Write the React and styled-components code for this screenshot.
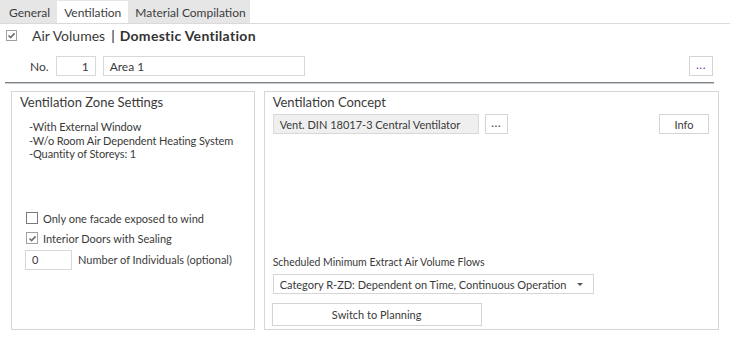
import React from 'react';
import styled, { createGlobalStyle } from 'styled-components';

const GlobalStyle = createGlobalStyle`
  html, body {
    margin: 0;
    padding: 0;
    background: #ffffff;
  }
  body {
    font-family: Lato, "Liberation Sans", sans-serif;
    color: #3a3a3a;
  }
`;

const Page = styled.div`
  width: 730px;
  height: 340px;
  background: #fff;
  overflow: hidden;
`;

const TabStrip = styled.div`
  height: 24px;
  border-bottom: 1px solid #dadada;
  box-sizing: border-box;
  display: flex;
`;

const TabGroup = styled.div`
  display: flex;
  align-items: flex-end;
  background: #e6e6e6;
  width: 250px;
  padding-left: 2px;
  box-sizing: border-box;
`;

const Tab = styled.div`
  height: 22px;
  display: flex;
  align-items: center;
  padding: 0 7px;
  font-size: 12px;
  white-space: nowrap;
  color: #3c3c3c;
  background: ${p => (p.$active ? '#ffffff' : 'transparent')};
`;

const TitleRow = styled.div`
  display: flex;
  align-items: center;
  height: 24px;
  padding-left: 6px;
  margin-top: -1px;
`;

const Check = styled.span`
  width: ${p => p.$size || 11}px;
  height: ${p => p.$size || 11}px;
  border: 1px solid ${p => (p.$checked ? '#a0a0a0' : '#7a7a7a')};
  background: #fff;
  box-sizing: border-box;
  display: inline-flex;
  align-items: center;
  justify-content: center;
  flex-shrink: 0;
`;

const TitleText = styled.span`
  font-size: 14px;
  margin-left: 15px;
  color: #3a3a3a;
  white-space: nowrap;
`;

const Bold = styled.span`
  font-weight: 700;
  color: #333;
  letter-spacing: 0.3px;
`;

const Divider = styled.span`
  display: inline-block;
  margin: 0 5px 0 6px;
  color: #222;
`;

const NumberRow = styled.div`
  display: flex;
  align-items: center;
  height: 20px;
  margin-top: 9px;
  padding-left: 30px;
  padding-right: 17px;
`;

const Label = styled.span`
  font-size: ${p => p.$size || 12}px;
  color: #3c3c3c;
  white-space: nowrap;
`;

const Field = styled.div`
  height: 20px;
  box-sizing: border-box;
  border: 1px solid #d8d8d8;
  background: ${p => (p.$grey ? '#efefef' : '#fff')};
  width: ${p => p.$w}px;
  display: flex;
  align-items: center;
  justify-content: ${p => (p.$right ? 'flex-end' : 'flex-start')};
  padding: 0 6px;
  font-size: ${p => p.$size || 12}px;
  color: #3a3a3a;
  white-space: nowrap;
  overflow: hidden;
  flex-shrink: 0;
`;

const Spacer = styled.div`
  flex: 1;
`;

const DotsButton = styled.div`
  width: ${p => p.$w || 24}px;
  height: 20px;
  box-sizing: border-box;
  border: 1px solid #d4d4d4;
  background: #fff;
  display: flex;
  align-items: center;
  justify-content: center;
  font-size: 12px;
  color: ${p => (p.$purple ? '#6b3fa0' : '#3a3a3a')};
  letter-spacing: 0.5px;
  padding-bottom: 4px;
  flex-shrink: 0;
`;

const Rule = styled.div`
  height: 2px;
  margin: 6px 16px 0 5px;
  background: linear-gradient(#7d848a 0 1px, #c9cdd0 1px 2px);
`;

const Panels = styled.div`
  display: flex;
  gap: 9px;
  padding: 7px 11px 0 11px;
`;

const Panel = styled.div`
  width: ${p => p.$w}px;
  height: 239px;
  border: 1px solid #d6d6d6;
  box-sizing: border-box;
  display: flex;
  flex-direction: column;
  padding: ${p => p.$pad};
`;

const PanelTitle = styled.div`
  font-size: 13px;
  color: #3a3a3a;
  height: 18px;
  line-height: 18px;
  white-space: nowrap;
`;

const InfoList = styled.div`
  margin-top: 9px;
  padding-left: 9px;
  font-size: 11px;
  letter-spacing: -0.1px;
  line-height: 13.5px;
  color: #3a3a3a;
  white-space: nowrap;
`;

const Body = styled.div`
  padding-left: 5px;
  display: flex;
  flex-direction: column;
`;

const CheckRow = styled.label`
  display: flex;
  align-items: center;
  gap: 5px;
  height: 13px;
  font-size: 11px;
  color: #3a3a3a;
  white-space: nowrap;
  margin-top: ${p => p.$mt}px;
  padding-left: 1px;
`;

const IndivRow = styled.div`
  display: flex;
  align-items: center;
  gap: 6px;
  margin-top: 5px;
`;

const ConceptRow = styled.div`
  display: flex;
  align-items: center;
  margin-top: 3px;
  gap: 6px;
`;

const Button = styled.div`
  height: ${p => p.$h || 20}px;
  width: ${p => p.$w}px;
  box-sizing: border-box;
  border: 1px solid #d4d4d4;
  background: #fff;
  display: flex;
  align-items: center;
  justify-content: center;
  font-size: 11px;
  color: #3a3a3a;
  white-space: nowrap;
`;

const SubLabel = styled.div`
  font-size: 10.5px;
  color: #3a3a3a;
  margin-top: auto;
  white-space: nowrap;
`;

const Select = styled.div`
  width: 321px;
  height: 20px;
  box-sizing: border-box;
  border: 1px solid #d6d6d6;
  display: flex;
  align-items: center;
  padding: 0 10px 0 6px;
  font-size: 11px;
  color: #3a3a3a;
  white-space: nowrap;
  margin-top: 6px;
`;

const Caret = styled.span`
  margin-left: auto;
  width: 0;
  height: 0;
  border-left: 3px solid transparent;
  border-right: 3px solid transparent;
  border-top: 3px solid #555;
`;

const Tick = () => (
  <svg width="9" height="9" viewBox="0 0 9 9">
    <path d="M1.5 4.5 L3.6 6.6 L7.6 2.4" fill="none" stroke="#6e6e6e" strokeWidth="1.6" />
  </svg>
);

const App = () => (
  <Page>
    <GlobalStyle />
    <TabStrip>
      <TabGroup>
        <Tab>General</Tab>
        <Tab $active>Ventilation</Tab>
        <Tab>Material Compilation</Tab>
      </TabGroup>
    </TabStrip>

    <TitleRow>
      <Check $checked><Tick /></Check>
      <TitleText>
        Air Volumes<Divider>|</Divider><Bold>Domestic Ventilation</Bold>
      </TitleText>
    </TitleRow>

    <NumberRow>
      <Label>No.</Label>
      <Field $w={40} $right style={{ marginLeft: 7 }}>1</Field>
      <Field $w={202} style={{ marginLeft: 7 }}>Area 1</Field>
      <Spacer />
      <DotsButton $purple>...</DotsButton>
    </NumberRow>

    <Rule />

    <Panels>
      <Panel $w={244} $pad="1px 8px 0 8px">
        <PanelTitle>Ventilation Zone Settings</PanelTitle>
        <InfoList>
          <div>-With External Window</div>
          <div>-W/o Room Air Dependent Heating System</div>
          <div>-Quantity of Storeys: 1</div>
        </InfoList>
        <Body>
          <CheckRow $mt={51}>
            <Check $size={12} />
            Only one facade exposed to wind
          </CheckRow>
          <CheckRow $mt={7}>
            <Check $size={12} $checked><Tick /></Check>
            Interior Doors with Sealing
          </CheckRow>
          <IndivRow>
            <Field $w={47} $size={11}>0</Field>
            <Label $size={11}>Number of Individuals (optional)</Label>
          </IndivRow>
        </Body>
      </Panel>

      <Panel $w={456} $pad="1px 9px 3px 8px">
        <PanelTitle>Ventilation Concept</PanelTitle>
        <ConceptRow>
          <Field $w={206} $grey $size={11}>Vent. DIN 18017-3 Central Ventilator</Field>
          <DotsButton $w={23}>...</DotsButton>
          <Spacer />
          <Button $w={50}>Info</Button>
        </ConceptRow>
        <SubLabel>Scheduled Minimum Extract Air Volume Flows</SubLabel>
        <Select>
          Category R-ZD: Dependent on Time, Continuous Operation
          <Caret />
        </Select>
        <Button $w={210} $h={23} style={{ marginTop: 9, marginLeft: -1 }}>Switch to Planning</Button>
      </Panel>
    </Panels>
  </Page>
);

export default App;
